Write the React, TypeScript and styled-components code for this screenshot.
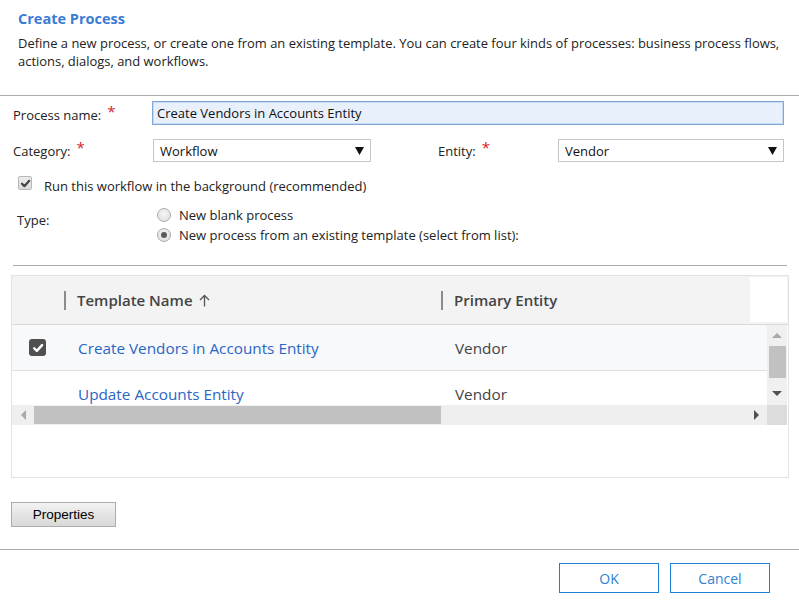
import React from "react";
import styled, { createGlobalStyle } from "styled-components";

const GlobalStyle = createGlobalStyle`
  html, body { margin: 0; padding: 0; background: #ffffff; }
  body { font-family: "Segoe UI", "Open Sans", "Noto Sans", sans-serif; color: #222; }
  * { box-sizing: border-box; }
`;

const Page = styled.div`
  width: 799px;
  height: 600px;
  display: flex;
  flex-direction: column;
  overflow: hidden;
`;

const Header = styled.header`
  height: 96px;
  padding: 10px 10px 0 18px;
  border-bottom: 1px solid #a9adb1;
`;

const Title = styled.h1`
  margin: 0;
  font-size: 14.5px;
  line-height: 18px;
  font-weight: 700;
  color: #3a7bd5;
`;

const Description = styled.p`
  margin: 6px 0 0;
  font-size: 12.95px;
  line-height: 18px;
  color: #222;
`;

const Form = styled.div`
  padding: 5px 15px 0 13px;
  display: flex;
  flex-direction: column;
`;

const Row = styled.div<{ $top?: number; $height: number }>`
  display: flex;
  align-items: center;
  height: ${(p) => p.$height}px;
  margin-top: ${(p) => p.$top ?? 0}px;
`;

const Label = styled.label<{ $width: number; $offset?: number; $drop?: number }>`
  width: ${(p) => p.$width}px;
  margin-left: ${(p) => p.$offset ?? 0}px;
  padding-top: ${(p) => p.$drop ?? 0}px;
  flex-shrink: 0;
  font-size: 13px;
  color: #222;
  display: flex;
  align-items: flex-start;
`;

const Req = styled.span`
  color: #d2232a;
  font-size: 15px;
  line-height: 10px;
  margin-left: 6px;
  position: relative;
  top: 0px;
`;

const TextInput = styled.div`
  flex: 1;
  height: 24px;
  background: #e8f0fb;
  border: 1px solid #7ea6d8;
  box-shadow: inset 0 0 0 1px #c9dbf2;
  font-size: 13px;
  line-height: 22px;
  padding-left: 4px;
  color: #111;
`;

const Select = styled.div<{ $width: number }>`
  width: ${(p) => p.$width}px;
  height: 23px;
  border: 1px solid #c6c6c6;
  display: flex;
  align-items: center;
  justify-content: space-between;
  padding: 0 6px 0 6px;
  font-size: 13px;
  color: #111;
  background: #fff;
`;

const Arrow = () => (
  <svg width="9" height="8" viewBox="0 0 9 8">
    <polygon points="0,0 9,0 4.5,8" fill="#111" />
  </svg>
);

const CheckRow = styled.div`
  display: flex;
  align-items: flex-start;
  margin-top: 14px;
  margin-left: 5px;
  height: 14px;
  gap: 12px;
  font-size: 13px;
  color: #222;
`;

const CheckText = styled.span`
  line-height: 14px;
  margin-top: 3px;
`;

const GrayCheck = styled.span`
  width: 14px;
  height: 14px;
  border: 1px solid #b9b9b9;
  border-radius: 2px;
  background: linear-gradient(#ececec, #dcdcdc);
  display: flex;
  align-items: center;
  justify-content: center;
`;

const TypeRow = styled.div`
  display: flex;
  margin-top: 15px;
`;

const TypeLabel = styled.div`
  width: 140px;
  padding-left: 4px;
  padding-top: 6px;
  font-size: 13px;
  line-height: 18px;
  color: #222;
`;

const RadioList = styled.div`
  display: flex;
  flex-direction: column;
`;

const RadioOption = styled.div`
  height: 20px;
  display: flex;
  align-items: center;
  gap: 8px;
  padding-left: 4px;
  font-size: 13px;
  color: #222;
`;

const RadioDot = styled.span<{ $checked?: boolean }>`
  width: 14px;
  height: 14px;
  border-radius: 50%;
  border: 1px solid #acacac;
  background: radial-gradient(circle at 50% 40%, #f4f4f4, #dedede);
  display: flex;
  align-items: center;
  justify-content: center;
  &::after {
    content: "";
    display: ${(p) => (p.$checked ? "block" : "none")};
    width: 6px;
    height: 6px;
    border-radius: 50%;
    background: #5a5a5a;
  }
`;

const Rule = styled.hr<{ $top: number; $inset: number }>`
  margin: ${(p) => p.$top}px ${(p) => p.$inset}px 0 ${(p) => p.$inset + 1}px;
  border: none;
  border-top: 1px solid #a9adb1;
  height: 0;
`;

const Table = styled.div`
  margin: 9px 11px 0;
  width: 778px;
  height: 203px;
  border: 1px solid #e3e3e3;
  display: flex;
  flex-direction: column;
`;

const HeadRow = styled.div`
  display: flex;
  height: 49px;
  background: #f3f3f3;
  border-bottom: 1px solid #dadada;
`;

const Cell = styled.div<{ $width: number; $pad?: number }>`
  width: ${(p) => p.$width}px;
  flex-shrink: 0;
  display: flex;
  align-items: center;
  padding-left: ${(p) => p.$pad ?? 0}px;
`;

const HeadCell = styled(Cell)`
  font-size: 15px;
  font-weight: 600;
  color: #444;
`;

const Divider = styled.span`
  width: 2px;
  height: 19px;
  background: #8c8c8c;
  margin-right: 11px;
`;

const SortIcon = styled.span`
  display: flex;
  margin-left: 6px;
`;

const HeadSpacer = styled.div`
  width: 37px;
  margin: 1px 0 2px;
  background: #fff;
`;

const Body = styled.div`
  display: flex;
  height: 80px;
`;

const Rows = styled.div`
  width: 755px;
  overflow: hidden;
`;

const DataRow = styled.div<{ $selected?: boolean }>`
  display: flex;
  height: 46px;
  background: ${(p) => (p.$selected ? "#f8f9fb" : "#fff")};
  border-bottom: 1px solid #e0e0e0;
`;

const RowCheck = styled.span`
  width: 17px;
  height: 17px;
  margin-left: 17px;
  border-radius: 3px;
  background: #505050;
  display: flex;
  align-items: center;
  justify-content: center;
`;

const LinkText = styled.span`
  font-size: 15.3px;
  color: #2b66c5;
`;

const PlainText = styled.span`
  font-size: 15.3px;
  color: #444;
`;

const VScroll = styled.div`
  width: 20px;
  background: #f0f0f0;
  display: flex;
  flex-direction: column;
  align-items: center;
`;

const ScrollBtn = styled.div<{ $h: number }>`
  height: ${(p) => p.$h}px;
  width: 100%;
  display: flex;
  align-items: center;
  justify-content: center;
`;

const VThumb = styled.div`
  width: 17px;
  height: 32px;
  background: #c1c1c1;
`;

const Fill = styled.div`
  flex: 1;
`;

const HScroll = styled.div`
  display: flex;
  height: 20px;
`;

const HTrack = styled.div`
  width: 755px;
  background: #efefef;
  display: flex;
  align-items: center;
`;

const HBtn = styled.div`
  width: 22px;
  height: 100%;
  display: flex;
  align-items: center;
  justify-content: center;
`;

const HThumb = styled.div`
  width: 407px;
  height: 18px;
  background: #c1c1c1;
`;

const Corner = styled.div`
  width: 20px;
  background: #dcdcdc;
`;

const PropsButton = styled.button`
  margin: 24px 0 0 11px;
  width: 105px;
  height: 25px;
  border: 1px solid #acacac;
  background: linear-gradient(#f3f3f3, #e4e4e4 50%, #d9d9d9);
  font-family: "Liberation Sans", Arial, sans-serif;
  font-size: 13.5px;
  color: #000;
  padding: 0;
  align-self: flex-start;
`;

const Footer = styled.div`
  display: flex;
  justify-content: flex-end;
  gap: 11px;
  padding: 13px 29px 0 0;
`;

const DialogButton = styled.button`
  width: 100px;
  height: 30px;
  border: 1px solid #1b7fd6;
  background: #fff;
  color: #2f7fd2;
  font-family: "Segoe UI", "Open Sans", sans-serif;
  font-size: 14px;
  padding: 0;
`;

const Tri = ({ dir, color }: { dir: "up" | "down" | "left" | "right"; color: string }) => {
  const pts = {
    up: "0,5 10,5 5,0",
    down: "0,0 10,0 5,5",
    left: "5,0 5,10 0,5",
    right: "0,0 0,10 5,5",
  }[dir];
  const vertical = dir === "up" || dir === "down";
  return (
    <svg width={vertical ? 10 : 5} height={vertical ? 5 : 10} viewBox={vertical ? "0 0 10 5" : "0 0 5 10"}>
      <polygon points={pts} fill={color} />
    </svg>
  );
};

const CheckMark = ({ color, size }: { color: string; size: number }) => (
  <svg width={size} height={size} viewBox="0 0 10 10">
    <path d="M1.8 5.2 L4 7.4 L8.4 2.6" fill="none" stroke={color} strokeWidth="2" strokeLinecap="round" strokeLinejoin="round" />
  </svg>
);

const SortUp = () => (
  <svg width="11" height="13" viewBox="0 0 11 13">
    <path d="M5.5 12.5 V1.5 M1 6 L5.5 1.5 L10 6" fill="none" stroke="#555" strokeWidth="1.3" />
  </svg>
);

export default function App() {
  return (
    <Page>
      <GlobalStyle />
      <Header>
        <Title>Create Process</Title>
        <Description>
          Define a new process, or create one from an existing template. You can create four kinds of processes: business process flows,
          actions, dialogs, and workflows.
        </Description>
      </Header>

      <Form>
        <Row $height={24}>
          <Label $width={139} $drop={4}>
            Process name:<Req>*</Req>
          </Label>
          <TextInput>Create Vendors in Accounts Entity</TextInput>
        </Row>
        <Row $height={23} $top={14}>
          <Label $width={140} $drop={1}>
            Category:<Req>*</Req>
          </Label>
          <Select $width={218}>
            Workflow
            <Arrow />
          </Select>
          <Label $width={120} $offset={67} $drop={1}>
            Entity:<Req>*</Req>
          </Label>
          <Select $width={226}>
            Vendor
            <Arrow />
          </Select>
        </Row>
        <CheckRow>
          <GrayCheck>
            <CheckMark color="#444" size={11} />
          </GrayCheck>
          <CheckText>Run this workflow in the background (recommended)</CheckText>
        </CheckRow>
        <TypeRow>
          <TypeLabel>Type:</TypeLabel>
          <RadioList>
            <RadioOption>
              <RadioDot />
              New blank process
            </RadioOption>
            <RadioOption>
              <RadioDot $checked />
              New process from an existing template (select from list):
            </RadioOption>
          </RadioList>
        </TypeRow>
      </Form>

      <Rule $top={20} $inset={12} />

      <Table>
        <HeadRow>
          <HeadCell $width={52} />
          <HeadCell $width={377}>
            <Divider />
            Template Name
            <SortIcon>
              <SortUp />
            </SortIcon>
          </HeadCell>
          <HeadCell $width={309}>
            <Divider />
            Primary Entity
          </HeadCell>
          <HeadSpacer />
        </HeadRow>
        <Body>
          <Rows>
            <DataRow $selected>
              <Cell $width={52}>
                <RowCheck>
                  <CheckMark color="#fff" size={12} />
                </RowCheck>
              </Cell>
              <Cell $width={377} $pad={14}>
                <LinkText>Create Vendors in Accounts Entity</LinkText>
              </Cell>
              <Cell $width={300} $pad={14}>
                <PlainText>Vendor</PlainText>
              </Cell>
            </DataRow>
            <DataRow>
              <Cell $width={52} />
              <Cell $width={377} $pad={14}>
                <LinkText>Update Accounts Entity</LinkText>
              </Cell>
              <Cell $width={300} $pad={14}>
                <PlainText>Vendor</PlainText>
              </Cell>
            </DataRow>
          </Rows>
          <VScroll>
            <ScrollBtn $h={21}>
              <Tri dir="up" color="#a8a8a8" />
            </ScrollBtn>
            <VThumb />
            <Fill />
            <ScrollBtn $h={24}>
              <Tri dir="down" color="#505050" />
            </ScrollBtn>
          </VScroll>
        </Body>
        <HScroll>
          <HTrack>
            <HBtn>
              <Tri dir="left" color="#a8a8a8" />
            </HBtn>
            <HThumb />
            <Fill />
            <HBtn>
              <Tri dir="right" color="#505050" />
            </HBtn>
          </HTrack>
          <Corner />
        </HScroll>
      </Table>

      <PropsButton>Properties</PropsButton>

      <Rule $top={22} $inset={-1} />

      <Footer>
        <DialogButton>OK</DialogButton>
        <DialogButton>Cancel</DialogButton>
      </Footer>
    </Page>
  );
}
